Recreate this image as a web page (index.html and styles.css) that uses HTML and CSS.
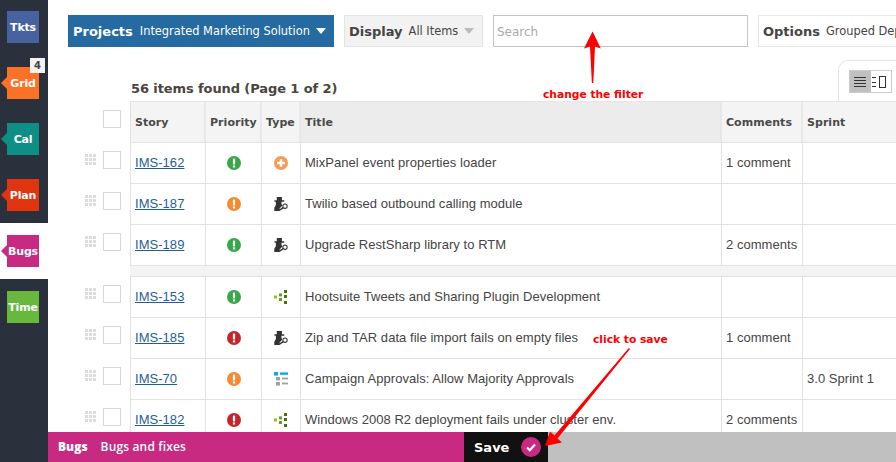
FILE: index.html
```html
<!DOCTYPE html>
<html lang="en">
<head>
<meta charset="utf-8">
<title>Bugs</title>
<link rel="stylesheet" href="styles.css">
</head>
<body>
<svg class="defs" width="0" height="0" aria-hidden="true">
  <symbol id="alert" viewBox="0 0 14 14"><circle cx="7" cy="7" r="7" fill="currentColor"/><rect x="5.9" y="2.6" width="2.2" height="5.8" rx=".6" fill="#fff"/><rect x="5.9" y="9.4" width="2.2" height="2.1" fill="#fff"/></symbol>
  <symbol id="plus" viewBox="0 0 14 14"><circle cx="7" cy="7" r="7" fill="#fb9a55"/><rect x="3" y="5.8" width="8" height="2.4" fill="#fff"/><rect x="5.8" y="3" width="2.4" height="8" fill="#fff"/></symbol>
  <symbol id="agent" viewBox="0 0 15 15"><path d="M3 0h5.500v3.400h2.500V5H8v2.400L9 9l-3 3.200V15H0.300v-3.500L2 8.500V5H.5V3.400H3z" fill="#333"/><circle cx="11.800" cy="9.900" r="2.300" fill="#fff" stroke="#333" stroke-width="1.100"/><path d="M10 11.400 5.500 14.300" stroke="#333" stroke-width="1.500"/></symbol>
  <symbol id="tree" viewBox="0 0 14 14"><rect x="0" y="5.5" width="3" height="3" fill="#8fc31f"/><rect x="5" y="3.4" width="3" height="3" fill="#6b9a2c"/><rect x="5" y="8" width="3" height="3" fill="#6b9a2c"/><rect x="10" y="0" width="3" height="3" fill="#3e7a00"/><rect x="10" y="5" width="3" height="3" fill="#3e7a00"/><rect x="10" y="11" width="3" height="3" fill="#3e7a00"/></symbol>
  <symbol id="list" viewBox="0 0 14 14"><rect x="0" y="0" width="4" height="3.6" fill="#00aee8"/><rect x="6" y="0.4" width="8" height="2.4" fill="#00aee8"/><rect x="2" y="5" width="4" height="3.4" fill="#a0a0a0"/><rect x="8" y="5.6" width="6" height="1.8" fill="#a0a0a0"/><rect x="2" y="10" width="4" height="3.6" fill="#a0a0a0"/><rect x="8" y="10.6" width="6" height="1.8" fill="#a0a0a0"/></symbol>
</svg>

<div class="app">
  <nav class="sidebar">
    <a class="tile tile-tkts">Tkts</a>
    <a class="tile tile-grid has-tip">Grid<span class="badge">4</span></a>
    <a class="tile tile-cal has-tip">Cal</a>
    <a class="tile tile-plan has-tip">Plan</a>
    <div class="active-slot"><a class="tile tile-bugs has-tip">Bugs</a></div>
    <a class="tile tile-time">Time</a>
  </nav>

  <div class="content">
    <main class="main">
      <div class="toolbar">
        <div class="tool tool-projects"><b>Projects</b><span>Integrated Marketing Solution</span><i class="caret"></i></div>
        <div class="tool tool-display"><b>Display</b><span>All Items</span><i class="caret caret-grey"></i></div>
        <div class="search">Search</div>
        <div class="tool tool-options"><b>Options</b><span>Grouped Dependencies</span></div>
      </div>

      <div class="count-row">
        <h1 class="count">56 items found (Page 1 of 2)</h1>
        <div class="view-tab">
          <div class="toggle">
            <span class="toggle-btn toggle-on"><svg width="14" height="12" viewBox="0 0 14 12"><path d="M1 1.500h12M1 4.500h12M1 7.500h12M1 10.500h12" stroke="#333" stroke-width="1"/></svg></span>
            <span class="toggle-btn"><svg width="17" height="12" viewBox="0 0 17 12"><path d="M0 1.500h4M0 6.500h4M0 10.500h4" stroke="#333"/><rect x="7.500" y=".5" width="6" height="11" fill="#fff" stroke="#333"/></svg></span>
          </div>
        </div>
      </div>

      <div class="row row-head">
        <div class="gutter"><span class="check"></span></div>
        <div class="cells cells-head">
          <div class="cell">Story</div><div class="cell">Priority</div><div class="cell">Type</div><div class="cell cell-sorted">Title</div><div class="cell">Comments</div><div class="cell">Sprint</div>
        </div>
      </div>

      <div class="row">
        <div class="gutter"><span class="drag"></span><span class="check"></span></div>
        <div class="cells">
          <div class="cell"><a class="story">IMS-162</a></div>
          <div class="cell cell-icon"><svg class="ico green"><use href="#alert"/></svg></div>
          <div class="cell cell-icon"><svg class="ico"><use href="#plus"/></svg></div>
          <div class="cell">MixPanel event properties loader</div>
          <div class="cell">1 comment</div><div class="cell"></div>
        </div>
      </div>
      <div class="row">
        <div class="gutter"><span class="drag"></span><span class="check"></span></div>
        <div class="cells">
          <div class="cell"><a class="story">IMS-187</a></div>
          <div class="cell cell-icon"><svg class="ico orange"><use href="#alert"/></svg></div>
          <div class="cell cell-icon"><svg class="ico"><use href="#agent"/></svg></div>
          <div class="cell">Twilio based outbound calling module</div>
          <div class="cell"></div><div class="cell"></div>
        </div>
      </div>
      <div class="row">
        <div class="gutter"><span class="drag"></span><span class="check"></span></div>
        <div class="cells">
          <div class="cell"><a class="story">IMS-189</a></div>
          <div class="cell cell-icon"><svg class="ico green"><use href="#alert"/></svg></div>
          <div class="cell cell-icon"><svg class="ico"><use href="#agent"/></svg></div>
          <div class="cell">Upgrade RestSharp library to RTM</div>
          <div class="cell">2 comments</div><div class="cell"></div>
        </div>
      </div>

      <div class="band"></div>

      <div class="row">
        <div class="gutter"><span class="drag"></span><span class="check"></span></div>
        <div class="cells">
          <div class="cell"><a class="story">IMS-153</a></div>
          <div class="cell cell-icon"><svg class="ico green"><use href="#alert"/></svg></div>
          <div class="cell cell-icon"><svg class="ico"><use href="#tree"/></svg></div>
          <div class="cell">Hootsuite Tweets and Sharing Plugin Development</div>
          <div class="cell"></div><div class="cell"></div>
        </div>
      </div>
      <div class="row">
        <div class="gutter"><span class="drag"></span><span class="check"></span></div>
        <div class="cells">
          <div class="cell"><a class="story">IMS-185</a></div>
          <div class="cell cell-icon"><svg class="ico red"><use href="#alert"/></svg></div>
          <div class="cell cell-icon"><svg class="ico"><use href="#agent"/></svg></div>
          <div class="cell">Zip and TAR data file import fails on empty files</div>
          <div class="cell">1 comment</div><div class="cell"></div>
        </div>
      </div>
      <div class="row">
        <div class="gutter"><span class="drag"></span><span class="check"></span></div>
        <div class="cells">
          <div class="cell"><a class="story">IMS-70</a></div>
          <div class="cell cell-icon"><svg class="ico orange"><use href="#alert"/></svg></div>
          <div class="cell cell-icon"><svg class="ico"><use href="#list"/></svg></div>
          <div class="cell">Campaign Approvals: Allow Majority Approvals</div>
          <div class="cell"></div><div class="cell">3.0 Sprint 1</div>
        </div>
      </div>
      <div class="row">
        <div class="gutter"><span class="drag"></span><span class="check"></span></div>
        <div class="cells">
          <div class="cell"><a class="story">IMS-182</a></div>
          <div class="cell cell-icon"><svg class="ico red"><use href="#alert"/></svg></div>
          <div class="cell cell-icon"><svg class="ico"><use href="#tree"/></svg></div>
          <div class="cell">Windows 2008 R2 deployment fails under cluster env.</div>
          <div class="cell">2 comments</div><div class="cell"></div>
        </div>
      </div>
    </main>

    <footer class="footer">
      <div class="footer-title"><b>Bugs</b><span>Bugs and fixes</span></div>
      <div class="save"><b>Save</b><svg width="20" height="20" viewBox="0 0 20 20"><circle cx="10" cy="10" r="10" fill="#c72a80"/><path d="M6 10.500l2.800 2.700L14 7.500" fill="none" stroke="#fff" stroke-width="2.200"/></svg></div>
    </footer>
  </div>
</div>

<svg class="arrows" width="896" height="462" viewBox="0 0 896 462" aria-hidden="true">
  <path d="M592.600 31.500L600.800 48.500L595 46.500L593.300 83H591.900L590 46.500L584 48.500Z" fill="#f00"/>
  <path d="M630 349L557.500 438.500L562 442.500L545 446L550 431.500L554.500 435.500L628.800 348Z" fill="#f00"/>
</svg>
<span class="note note-filter">change the filter</span>
<span class="note note-save">click to save</span>
</body>
</html>
```
FILE: styles.css
```css
* { box-sizing: border-box; }
html, body { margin: 0; height: 100%; overflow: hidden; background: #fff; }
body { position: relative; font-family: "Liberation Sans", Arial, sans-serif; color: #444; }
.defs { position: absolute; }

.app { display: flex; height: 462px; }

/* sidebar */
.sidebar { width: 48px; flex: none; background: #2a303c; display: flex; flex-direction: column; align-items: flex-start; padding: 11px 0 0 7px; gap: 24px; }
.tile { position: relative; display: flex; align-items: center; justify-content: center; width: 32px; height: 32px; color: #fff; font: bold 11px "DejaVu Sans", Verdana, sans-serif; letter-spacing: -.2px; }
.tile-tkts { background: #46639f; }
.tile-grid { background: #fb7226; }
.tile-cal { background: #0d8f86; }
.tile-plan { background: #e03510; }
.tile-bugs { background: #c72a80; }
.tile-time { background: #67b83c; }
.has-tip::before { content: ""; position: absolute; left: -6px; top: 10px; border-style: solid; border-width: 6px 6px 6px 0; border-color: transparent; }
.tile-grid::before { border-right-color: #fb7226; }
.tile-cal::before { border-right-color: #0d8f86; }
.tile-plan::before { border-right-color: #e03510; }
.tile-bugs::before { border-right-color: #c72a80; }
.badge { position: absolute; top: -9px; right: -6px; width: 15px; height: 15px; background: #f2f2f2; color: #444; font-size: 10px; line-height: 15px; text-align: center; }
.active-slot { width: 48px; height: 56px; margin: -12px 0 -12px -7px; padding-left: 7px; background: #fff; display: flex; align-items: center; }

/* content */
.content { flex: 1; min-width: 0; display: flex; flex-direction: column; }
.main { flex: 1; min-height: 0; overflow: hidden; }

.toolbar { display: flex; gap: 10px; padding: 15px 0 0 20px; width: 1000px; }
.tool { height: 32px; display: flex; align-items: center; flex: none; padding-left: 4px; }
.tool b { font: bold 13px "DejaVu Sans", Verdana, sans-serif; }
.tool span { font: 11.400px "DejaVu Sans", Verdana, sans-serif; margin-left: 6px; }
.tool-projects { width: 266px; padding-left: 5px; background: #256aa0; color: #fff; }
.tool-projects span { margin-left: 7px; }
.tool-display { width: 139px; background: #f2f2f2; border: 1px solid #e3e3e3; color: #444; }
.tool-options { width: 240px; background: #fff; border: 1px solid #e8e8e8; color: #444; }
.caret { width: 0; height: 0; margin-left: 6px; border: 5.500px solid transparent; border-bottom: 0; border-top: 6px solid #fff; }
.caret-grey { border-top-color: #bbb; }
.search { width: 255px; height: 32px; flex: none; border: 1px solid #c4c4c4; padding: 1px 0 0 3px; font: 12px/30px "DejaVu Sans", Verdana, sans-serif; color: #aaa; }

.count-row { display: flex; align-items: flex-end; justify-content: space-between; height: 54px; margin-left: 83px; }
.count { margin: 0 0 5px; font: bold 13px "DejaVu Sans", Verdana, sans-serif; letter-spacing: -.1px; color: #4a4540; }
.view-tab { width: 70px; height: 41px; margin-right: -12px; border: 1px solid #e6e6e6; border-bottom: 0; border-top-left-radius: 10px; padding: 9px 0 0 10px; }
.toggle { display: flex; width: 43px; height: 23px; border: 1px solid #ccc; background: #fff; }
.toggle-btn { flex: 1; display: flex; align-items: center; justify-content: center; }
.toggle-on { background: #c0c0c0; }

/* table */
.row { display: flex; padding-left: 37px; }
.gutter { width: 45px; flex: none; display: flex; align-items: flex-start; padding-top: 8px; }
.row-head .gutter { padding-top: 9px; }
.check { width: 18px; height: 18px; border: 1px solid #d8d8d8; background: #fff; margin-left: auto; margin-right: 9px; }
.drag { width: 11px; height: 11px; margin-top: 3px; background: linear-gradient(90deg, transparent 3px, #fff 3px) 0 0 / 4px 4px, linear-gradient(transparent 3px, #fff 3px) 0 0 / 4px 4px, #dcdcdc; }
.cells { display: grid; grid-template-columns: 75px 56px 39px 421px 81px 130px; height: 41px; border-bottom: 1px solid #e2e2e2; border-left: 1px solid #e2e2e2; flex: none; }
.cell { display: flex; align-items: center; padding: 0 0 2px 4px; font-size: 13px; letter-spacing: .04px; border-right: 1px solid #e2e2e2; white-space: nowrap; color: #444; }
.cell-icon { justify-content: center; padding: 0 0 1px; }
.cells-head { height: 42px; border-top: 1px solid #e6e6e6; background: #f4f4f4; }
.cells-head .cell { font: bold 11px "DejaVu Sans", Verdana, sans-serif; color: #4a4a4a; padding-bottom: 0; border-right: 2px solid #e8e8e8; }
.cells-head .cell-sorted { background: #ececec; }
.story { color: #1f5f96; text-decoration: underline; font-size: 13px; }
.ico { width: 14px; height: 14px; }
.green { color: #36a848; }
.orange { color: #f58a32; }
.red { color: #c4262a; }
.band { height: 11px; margin-left: 82px; background: #f3f3f3; border-bottom: 1px solid #e2e2e2; }

/* footer */
.footer { height: 30px; flex: none; display: flex; background: #c0c0c0; }
.footer-title { width: 416px; background: #c72a80; color: #fff; display: flex; align-items: center; padding: 0 0 2px 10px; font: bold 12px "Open Sans", sans-serif; }
.footer-title span { margin-left: 13px; font-weight: 600; letter-spacing: .15px; }
.save { width: 84px; background: #111; color: #fff; display: flex; align-items: center; padding-left: 10px; gap: 12px; font: bold 13px "DejaVu Sans", Verdana, sans-serif; }

/* annotations laid over the screenshot */
.arrows { position: absolute; left: 0; top: 0; pointer-events: none; }
.note { position: absolute; color: #f00; font: bold 10.700px "DejaVu Sans", Verdana, sans-serif; white-space: nowrap; }
.note-filter { left: 543px; top: 88px; }
.note-save { left: 593px; top: 333px; }
```
